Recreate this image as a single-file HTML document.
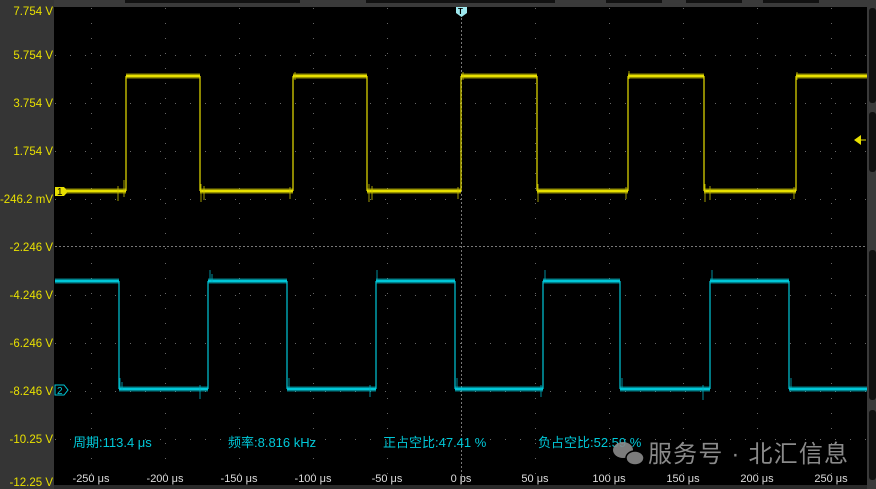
<!DOCTYPE html>
<html><head><meta charset="utf-8"><style>
html,body{margin:0;padding:0;background:#000;width:876px;height:489px;overflow:hidden}
svg{display:block}
text{font-family:"Liberation Sans","Noto Sans CJK SC",sans-serif}
</style></head><body>
<svg width="876" height="489" viewBox="0 0 876 489" xmlns="http://www.w3.org/2000/svg">
<rect width="876" height="489" fill="#000"/>
<rect x="0" y="0" width="876" height="7" fill="#3a3a3a"/>
<rect x="125" y="0" width="175" height="3" fill="#111"/>
<rect x="366" y="0" width="189" height="3" fill="#111"/>
<rect x="606" y="0" width="56" height="3" fill="#111"/>
<rect x="686" y="0" width="56" height="3" fill="#111"/>
<rect x="763" y="0" width="56" height="3" fill="#111"/>
<rect x="0" y="0" width="54" height="489" fill="#353535"/>
<rect x="867" y="0" width="9" height="489" fill="#3a3a3a"/>
<rect x="869" y="8" width="7" height="95" rx="3" fill="#111"/>
<rect x="869" y="112" width="7" height="60" rx="3" fill="#111"/>
<rect x="869" y="250" width="7" height="150" rx="3" fill="#111"/>
<rect x="869" y="410" width="7" height="70" rx="3" fill="#111"/>
<rect x="54" y="485" width="813" height="4" fill="#2a2a2a"/>
<g stroke="#666" stroke-width="1" stroke-dasharray="1,14">
<line x1="91.5" y1="8" x2="91.5" y2="485"/>
<line x1="165.5" y1="8" x2="165.5" y2="485"/>
<line x1="239.5" y1="8" x2="239.5" y2="485"/>
<line x1="313.5" y1="8" x2="313.5" y2="485"/>
<line x1="387.5" y1="8" x2="387.5" y2="485"/>
<line x1="535.5" y1="8" x2="535.5" y2="485"/>
<line x1="609.5" y1="8" x2="609.5" y2="485"/>
<line x1="683.5" y1="8" x2="683.5" y2="485"/>
<line x1="757.5" y1="8" x2="757.5" y2="485"/>
<line x1="831.5" y1="8" x2="831.5" y2="485"/>
</g>
<g stroke="#666" stroke-width="1" stroke-dasharray="1,14">
<line x1="55" y1="55.5" x2="867" y2="55.5"/>
<line x1="55" y1="103.5" x2="867" y2="103.5"/>
<line x1="55" y1="151.5" x2="867" y2="151.5"/>
<line x1="55" y1="199.5" x2="867" y2="199.5"/>
<line x1="55" y1="295.5" x2="867" y2="295.5"/>
<line x1="55" y1="343.5" x2="867" y2="343.5"/>
<line x1="55" y1="391.5" x2="867" y2="391.5"/>
<line x1="55" y1="439.5" x2="867" y2="439.5"/>
</g>
<line x1="55" y1="246.5" x2="867" y2="246.5" stroke="#777" stroke-dasharray="2,2"/>
<line x1="461.5" y1="14" x2="461.5" y2="485" stroke="#777" stroke-dasharray="2,2"/>
<!-- yellow trace -->
<g fill="none" stroke="#e8e000">
<path stroke-width="1.2" d="M126,191V76M200,76V191M293,191V76M367,76V191M461,191V76M537,76V191M628,191V76M704,76V191M796,191V76"/>
<path stroke-width="3" d="M55,191H126M126,76H200M200,191H293M293,76H367M367,191H461M461,76H537M537,191H628M628,76H704M704,191H796M796,76H867"/>
<path stroke-width="6" opacity="0.3" d="M55,191H126M126,76H200M200,191H293M293,76H367M367,191H461M461,76H537M537,191H628M628,76H704M704,191H796M796,76H867"/>
<g stroke="#c8c000" stroke-width="1" opacity="0.8">
<path d="M118,186v15M124,180v17M201,184v18M204,186v14M290,187v12M295,72v8M369,184v18M372,186v14M458,187v12M463,72v8M538,184v18M626,187v12M629,71v8M705,184v18M710,186v14M794,187v12M797,72v8"/>
</g>
</g>
<!-- cyan trace -->
<g fill="none" stroke="#00c8d8">
<path stroke-width="1.2" d="M119,281V389M208,389V281M287,281V389M376,389V281M455,281V389M543,389V281M620,281V389M710,389V281M789,281V389"/>
<path stroke-width="3" d="M55,281H119M119,389H208M208,281H287M287,389H376M376,281H455M455,389H543M543,281H620M620,389H710M710,281H789M789,389H867"/>
<path stroke-width="6" opacity="0.3" d="M55,281H119M119,389H208M208,281H287M287,389H376M376,281H455M455,389H543M543,281H620M620,389H710M710,281H789M789,389H867"/>
<g stroke="#00b0c0" stroke-width="1" opacity="0.8">
<path d="M120,378v10M122,382v8M200,385v14M210,270v10M212,274v8M289,378v10M370,385v12M377,270v10M457,378v10M541,385v12M545,270v10M622,378v10M703,385v15M712,270v10M791,378v10"/>
</g>
</g>
<path d="M55,187h9l4,4.5l-4,4.5h-9z" fill="#e8e000"/>
<text x="57" y="195" font-size="10" fill="#000">1</text>
<path d="M55,385h9l4,5l-4,5h-9z" fill="#000" stroke="#00c8d8"/>
<text x="57" y="394" font-size="10" fill="#00c8d8">2</text>
<path d="M456,7h11v6l-5.5,4l-5.5,-4z" fill="#9ee8ee"/>
<text x="458" y="14" font-size="8" fill="#000" font-weight="bold">T</text>
<path d="M854,140l7,-5v10z" fill="#e8e000"/>
<line x1="858" y1="140" x2="866" y2="140" stroke="#e8e000"/>
<g font-size="11.5" fill="#e8e000" text-anchor="end">
<text x="53" y="15">7.754 V</text>
<text x="53" y="59">5.754 V</text>
<text x="53" y="107">3.754 V</text>
<text x="53" y="155">1.754 V</text>
<text x="53" y="203">-246.2 mV</text>
<text x="53" y="251">-2.246 V</text>
<text x="53" y="299">-4.246 V</text>
<text x="53" y="347">-6.246 V</text>
<text x="53" y="395">-8.246 V</text>
<text x="53" y="443">-10.25 V</text>
<text x="53" y="486">-12.25 V</text>
</g>
<g font-size="11" fill="#ddd" text-anchor="middle">
<text x="91" y="482">-250 μs</text>
<text x="165" y="482">-200 μs</text>
<text x="239" y="482">-150 μs</text>
<text x="313" y="482">-100 μs</text>
<text x="387" y="482">-50 μs</text>
<text x="461" y="482">0 ps</text>
<text x="535" y="482">50 μs</text>
<text x="609" y="482">100 μs</text>
<text x="683" y="482">150 μs</text>
<text x="757" y="482">200 μs</text>
<text x="831" y="482">250 μs</text>
</g>
<g font-size="13" fill="#00c8d8">
<text x="73" y="447">周期:113.4 μs</text>
<text x="228" y="447">频率:8.816 kHz</text>
<text x="383" y="447">正占空比:47.41 %</text>
<text x="538" y="447">负占空比:52.59 %</text>
</g>
<g fill="#8a8a8a" opacity="0.9">
<ellipse cx="623" cy="450" rx="10" ry="8"/>
<ellipse cx="635" cy="458" rx="9" ry="7" stroke="#000" stroke-width="1.5"/>
</g>
<text x="648" y="462" font-size="24" fill="#8a8a8a" textLength="200" lengthAdjust="spacing">服务号 · 北汇信息</text>
</svg>
</body></html>
